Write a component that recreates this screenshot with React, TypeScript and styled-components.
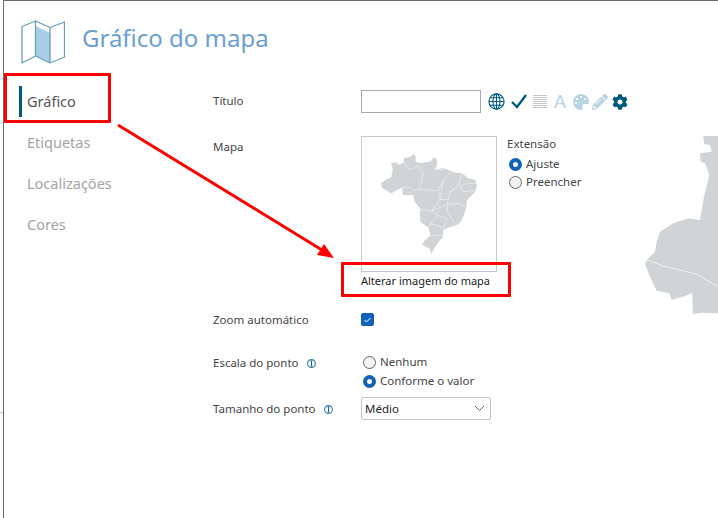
import React from "react";
import styled, { createGlobalStyle } from "styled-components";
import { FaCog, FaPalette, FaPencilAlt } from "react-icons/fa";

const Global = createGlobalStyle`
  html, body { margin: 0; padding: 0; background: #fff; }
  body { font-family: "Noto Sans", "Open Sans", sans-serif; color: #444; }
`;

const Page = styled.div`
  position: relative;
  display: flex;
  width: 718px;
  height: 518px;
  overflow: hidden;
  background: #fff;
`;
const Gutter = styled.div`
  width: 3px;
  padding-top: 412px;
  flex: none;
`;
const Tick = styled.div`
  height: 1px;
  background: #c4c4c4;
`;
const Window = styled.div`
  flex: 1;
  border-left: 1px solid #6a6a6a;
  border-top: 1px solid #6a6a6a;
  display: flex;
  flex-direction: column;
`;
const Header = styled.header`
  height: 72px;
  display: flex;
  align-items: flex-start;
  padding: 19px 0 0 17px;
  box-sizing: border-box;
  gap: 17px;
`;
const Title = styled.h1`
  margin: 1px 0 0;
  font-size: 24px;
  line-height: 34px;
  font-weight: 400;
  color: #6b9fd2;
`;
const Body = styled.div`
  display: flex;
  flex: 1;
`;
const Side = styled.nav`
  width: 209px;
  flex: none;
  padding: 13px 0 0 15px;
  box-sizing: border-box;
`;
const NavItem = styled.div<{ $active?: boolean }>`
  height: 31px;
  margin-bottom: 10px;
  display: flex;
  align-items: center;
  padding: 0 0 2px 5px;
  box-sizing: border-box;
  border-left: 3px solid ${(p) => (p.$active ? "#005a7d" : "transparent")};
  font-size: 14.5px;
  color: ${(p) => (p.$active ? "#555" : "#a3a3a3")};
`;
const Form = styled.div`
  flex: 1;
  padding-top: 17px;
`;
const Row = styled.div<{ $h: number; $mb?: number }>`
  display: flex;
  align-items: flex-start;
  height: ${(p) => p.$h}px;
  margin-bottom: ${(p) => p.$mb ?? 0}px;
`;
const Label = styled.div<{ $pt?: number }>`
  width: 148px;
  flex: none;
  font-size: 11.5px;
  line-height: 16px;
  padding-top: ${(p) => p.$pt ?? 0}px;
  color: #444;
  display: flex;
  align-items: center;
  gap: 8px;
`;
const TextInput = styled.input`
  width: 120px;
  height: 23px;
  box-sizing: border-box;
  border: 1px solid #a9a9a9;
  background: #fff;
  padding: 0;
  outline: none;
`;
const Tools = styled.div`
  display: flex;
  align-items: center;
  height: 23px;
  margin-left: 7px;
`;
const ToolSlot = styled.span<{ $w: number; $c: string }>`
  width: ${(p) => p.$w}px;
  display: flex;
  justify-content: center;
  align-items: center;
  color: ${(p) => p.$c};
`;
const ALetter = styled.span`
  font-size: 18px;
  line-height: 20px;
  font-family: "Liberation Sans", sans-serif;
`;
const MapCol = styled.div`
  width: 136px;
  flex: none;
`;
const MapBox = styled.div`
  width: 136px;
  height: 136px;
  box-sizing: border-box;
  border: 1px solid #c8c8c8;
  display: flex;
  align-items: center;
  justify-content: center;
`;
const ChangeLink = styled.div`
  font-size: 11px;
  line-height: 18px;
  color: #222;
  white-space: nowrap;
`;
const Extent = styled.div`
  margin-left: 10px;
  font-size: 11.5px;
  line-height: 16px;
`;
const RadioGroup = styled.div<{ $pl?: number; $mt?: number; $gap?: number }>`
  display: flex;
  flex-direction: column;
  gap: ${(p) => p.$gap ?? 5}px;
  padding-left: ${(p) => p.$pl ?? 0}px;
  margin-top: ${(p) => p.$mt ?? 0}px;
`;
const RadioRow = styled.div`
  display: flex;
  align-items: center;
  gap: 4px;
  font-size: 11.5px;
  line-height: 14px;
  color: #444;
`;
const RadioDot = styled.span<{ $on?: boolean }>`
  width: 13px;
  height: 13px;
  box-sizing: border-box;
  border-radius: 50%;
  flex: none;
  border: ${(p) => (p.$on ? "4px solid #0f62b5" : "1px solid #666")};
  background: ${(p) => (p.$on ? "#fff" : "#f3f3f3")};
`;
const Check = styled.span`
  width: 13px;
  height: 13px;
  margin-top: 1px;
  border-radius: 2px;
  background: #0f62b5;
  display: flex;
  align-items: center;
  justify-content: center;
`;
const Select = styled.div`
  width: 130px;
  height: 23px;
  box-sizing: border-box;
  border: 1px solid #c4c4c4;
  border-radius: 2px;
  display: flex;
  align-items: center;
  justify-content: space-between;
  padding: 0 5px 0 3px;
  font-size: 11.5px;
  color: #222;
  background: #fff;
`;
const Backdrop = styled.svg`
  position: absolute;
  left: 630px;
  top: 120px;
  width: 88px;
  height: 240px;
`;
const Callout = styled.div<{ $x: number; $y: number; $w: number; $h: number }>`
  position: absolute;
  left: ${(p) => p.$x}px;
  top: ${(p) => p.$y}px;
  width: ${(p) => p.$w}px;
  height: ${(p) => p.$h}px;
  box-sizing: border-box;
  border: 3px solid #fe0000;
  border-radius: 1px;
`;
const ArrowLayer = styled.svg`
  position: absolute;
  left: 110px;
  top: 115px;
  width: 240px;
  height: 150px;
`;

const MapIcon = () => (
  <svg width="44" height="44" viewBox="0 0 44 44" fill="none">
    <path d="M14.5 6 L29 13 V43 L14.5 36 Z" fill="#a8cfe8" />
    <path
      d="M1 6.5 V43 L14.5 36 L29 43 L43.500 37 V2 L29 7.500 L14.500 1 Z M14.500 1 V36 M29 7.500 V43"
      stroke="#6a9fb5"
      strokeWidth="1.300"
      strokeLinejoin="round"
    />
  </svg>
);

const Globe = () => (
  <svg width="17" height="17" viewBox="0 0 17 17" fill="none" stroke="#005a7d" strokeWidth="1.100">
    <circle cx="8.500" cy="8.500" r="7.600" />
    <ellipse cx="8.500" cy="8.500" rx="3.500" ry="7.600" />
    <path d="M8.500 1 V16 M1 8.500 H16 M2 4.800 H15 M2 12.200 H15" />
  </svg>
);
const CheckMark = () => (
  <svg width="16" height="15" viewBox="0 0 16 15" fill="none" stroke="#005a7d" strokeWidth="2.400">
    <path d="M1 8 L6 13 L15 1" />
  </svg>
);
const LinesIcon = () => (
  <svg width="14" height="14" viewBox="0 0 14 14" stroke="#c6c6c6" strokeWidth="1">
    <path d="M0 .5 H14 M0 2.500 H14 M0 4.500 H14 M0 6.500 H14 M0 8.500 H14 M0 10.500 H14 M0 12.500 H14" />
  </svg>
);
const Info = () => (
  <svg width="9" height="9" viewBox="0 0 9 9" fill="none">
    <circle cx="4.500" cy="4.500" r="3.900" stroke="#2f7ea3" strokeWidth="1.100" />
    <path d="M3.500 2 H5.500 M4.500 2 V7 M3.500 7 H5.500" stroke="#1f5f80" strokeWidth="1" />
  </svg>
);

const Brazil = () => (
  <svg width="96" height="100" viewBox="65 43 285 297">
    <path
      fill="#d0d4d6"
      d="M95 70 L112 68 L118 75 L132 68 L133 55 L150 52 L163 43 L168 52 L168 66 L180 70 L213 65 L222 52 L230 58 L232 75 L225 88 L250 85 L268 92 L285 98 L305 100 L325 115 L345 120 L350 135 L345 155 L330 170 L320 180 L318 205 L305 240 L295 252 L265 262 L250 268 L248 290 L235 305 L222 325 L215 340 L210 325 L187 312 L195 300 L212 285 L206 262 L182 245 L180 220 L183 208 L165 185 L160 165 L130 165 L128 143 L112 150 L95 160 L80 150 L68 145 L65 130 L75 122 L95 112 L100 90 Z"
    />
    <path
      fill="none"
      stroke="#eef0f1"
      strokeWidth="2"
      d="M132 68 L150 90 L175 78 L190 100 L180 148 L235 152 L250 122 L275 92 M128 143 L150 142 L165 150 L180 148 M250 122 L240 178 L265 178 L270 155 L298 130 L305 102 M270 155 L320 130 L348 130 M298 130 L308 155 L345 152 M235 152 L240 178 L215 212 L183 208 M265 178 L262 192 L215 212 M262 192 L300 190 L318 205 M262 192 L262 215 L285 250 M215 212 L232 225 L206 262 M232 225 L262 235 L250 262 L212 250 M212 285 L248 285 M225 88 L250 90"
    />
  </svg>
);

const Chevron = () => (
  <svg width="11" height="7" viewBox="0 0 11 7" fill="none" stroke="#666" strokeWidth="1">
    <path d="M1 1 L5.500 5.500 L10 1" />
  </svg>
);

export default function App() {
  return (
    <Page>
      <Global />
      <Backdrop viewBox="0 0 264 720">
        <path
          fill="#d0d4d6"
          d="M220 48 L264 48 L264 580 L215 578 L188 582 L187 518 L160 530 L125 540 L118 520 L80 512 L60 470 L45 432 L55 415 L75 395 L80 365 L90 335 L130 310 L175 295 L210 300 L222 230 L238 165 L225 130 L212 125 L210 100 L245 95 L240 75 L222 72 Z"
        />
        <path fill="none" stroke="#f4f5f5" strokeWidth="2.500" d="M55 420 L100 438 L200 463 L264 500" />
      </Backdrop>
      <Gutter>
        <Tick />
      </Gutter>
      <Window>
        <Header>
          <MapIcon />
          <Title>Gráfico do mapa</Title>
        </Header>
        <Body>
          <Side>
            <NavItem $active>Gráfico</NavItem>
            <NavItem>Etiquetas</NavItem>
            <NavItem>Localizações</NavItem>
            <NavItem>Cores</NavItem>
          </Side>
          <Form>
            <Row $h={23} $mb={23}>
              <Label $pt={3}>Título</Label>
              <TextInput />
              <Tools>
                <ToolSlot $w={17} $c="#005a7d"><Globe /></ToolSlot>
                <ToolSlot $w={27} $c="#005a7d"><CheckMark /></ToolSlot>
                <ToolSlot $w={16} $c="#c6c6c6"><LinesIcon /></ToolSlot>
                <ToolSlot $w={24} $c="#b9d3e0"><ALetter>A</ALetter></ToolSlot>
                <ToolSlot $w={18} $c="#b9d3e0"><FaPalette size={16} /></ToolSlot>
                <ToolSlot $w={20} $c="#b9d3e0"><FaPencilAlt size={16} /></ToolSlot>
                <ToolSlot $w={20} $c="#005a7d"><FaCog size={16} /></ToolSlot>
              </Tools>
            </Row>
            <Row $h={155} $mb={21}>
              <Label $pt={3}>Mapa</Label>
              <MapCol>
                <MapBox>
                  <Brazil />
                </MapBox>
                <ChangeLink>Alterar imagem do mapa</ChangeLink>
              </MapCol>
              <Extent>
                Extensão
                <RadioGroup $pl={2} $mt={5} $gap={4}>
                  <RadioRow><RadioDot $on />Ajuste</RadioRow>
                  <RadioRow><RadioDot />Preencher</RadioRow>
                </RadioGroup>
              </Extent>
            </Row>
            <Row $h={14} $mb={29}>
              <Label>Zoom automático</Label>
              <Check>
                <svg width="9" height="8" viewBox="0 0 9 8" fill="none" stroke="#fff" strokeWidth="1">
                  <path d="M1.500 4 L3.500 6 L7.500 2" />
                </svg>
              </Check>
            </Row>
            <Row $h={36} $mb={6}>
              <Label>Escala do ponto <Info /></Label>
              <RadioGroup $pl={2}>
                <RadioRow><RadioDot />Nenhum</RadioRow>
                <RadioRow><RadioDot $on />Conforme o valor</RadioRow>
              </RadioGroup>
            </Row>
            <Row $h={23}>
              <Label $pt={4}>Tamanho do ponto <Info /></Label>
              <Select>Médio<Chevron /></Select>
            </Row>
          </Form>
        </Body>
      </Window>
      <Callout $x={4} $y={73} $w={107} $h={50} />
      <Callout $x={341} $y={262} $w={170} $h={35} />
      <ArrowLayer viewBox="0 0 240 150">
        <path d="M8 10 L212 135" stroke="#fe0000" strokeWidth="3" fill="none" />
        <path d="M224 143 L207 140 L214 129 Z" fill="#fe0000" />
      </ArrowLayer>
    </Page>
  );
}
